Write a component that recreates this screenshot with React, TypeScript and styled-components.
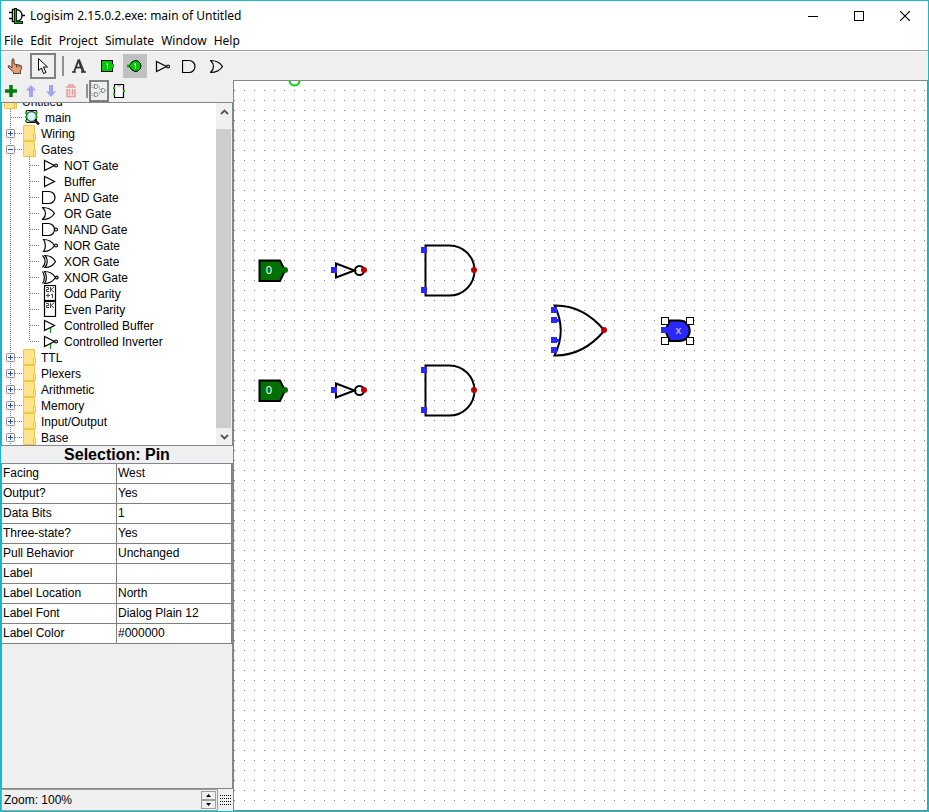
import React from "react";
import styled, { createGlobalStyle, css } from "styled-components";

const EDGE = "#828790";
const FACE = "#efefef";
const DOTS = "#808080";
const PORT = "#2828ff";
const ERROR = "#c00000";

const GlobalStyle = createGlobalStyle`
  *, *::before, *::after { box-sizing: border-box; }
  body { margin: 0; background: #fff; }
  button { margin: 0; padding: 0; border: 0; background: none; font: inherit; color: inherit; }
`;

const Window = styled.div`
  display: flex;
  flex-direction: column;
  height: 100vh;
  border: 1px solid #18b9c4;
  background: ${FACE};
  color: #000;
  font: 12px/16px "Liberation Sans", Arial, sans-serif;
`;

/* ---------- title and menus ---------- */

const TitleBar = styled.header`
  display: flex;
  align-items: center;
  gap: 5px;
  height: 30px;
  padding-left: 8px;
  background: #fff;
  font-family: "Noto Sans", sans-serif;
`;

const Title = styled.h1`
  flex: 1;
  margin: 0;
  font-size: 12px;
  font-weight: 400;
  white-space: nowrap;
`;

const CaptionGroup = styled.div`
  display: flex;
`;

const CaptionButton = styled.button`
  display: grid;
  place-items: center;
  width: 46px;
  height: 28px;
`;

const MenuBar = styled.nav`
  display: flex;
  align-items: center;
  gap: 7px;
  height: 20px;
  padding: 0 4px 0 3px;
  border-bottom: 1px solid #a0a0a0;
  background: #fff;
  font-family: "Noto Sans", sans-serif;

  button { line-height: 18px; }
`;

/* ---------- tool bars ---------- */

const ToolBar = styled.div`
  display: flex;
  align-items: center;
  gap: 4px;
  height: 29px;
  padding-left: 2px;
  border-top: 1px solid #fff;
`;

const ExplorerBar = styled(ToolBar)`
  gap: 2px;
  height: 22px;
  padding-left: 1px;
  border-top: 0;
`;

const ToolButton = styled.button<{ $state?: "selected" | "haloed"; $small?: boolean }>`
  display: grid;
  place-items: center;
  flex: none;
  width: ${(p) => (p.$small ? 18 : 24)}px;
  height: ${(p) => (p.$small ? 20 : 24)}px;
  ${(p) => p.$state === "haloed" && css`background: #c0c0c0;`}
  ${(p) => p.$state === "selected" && css`
    outline: 2px solid #808080;
    outline-offset: -1px;
  `}
`;

const Divider = styled.span<{ $small?: boolean }>`
  flex: none;
  width: 2px;
  height: ${(p) => (p.$small ? 14 : 20)}px;
  margin: ${(p) => (p.$small ? "0 0 0 4px" : "0 -1px 0 3px")};
  background: #909090;
`;

/* ---------- side panel ---------- */

const Workspace = styled.div`
  flex: 1;
  display: grid;
  grid-template-columns: 232px minmax(0, 1fr);
  min-height: 0;
`;

const Side = styled.aside`
  display: flex;
  flex-direction: column;
  min-height: 0;
`;

const TreePane = styled.div`
  display: flex;
  flex: 0 1 344px;
  min-height: 0;
  border: 1px solid ${EDGE};
  background: #fff;
`;

const TreeView = styled.div`
  flex: 1;
  display: flex;
  flex-direction: column;
  justify-content: flex-end;
  overflow: hidden;
`;

const TreeRow = styled.div`
  display: flex;
  flex: none;
  height: 16px;
  line-height: 18px;
  white-space: nowrap;
`;

const RowIcon = styled.span<{ $leaf?: boolean; $root?: boolean }>`
  flex: none;
  display: grid;
  place-items: center;
  width: ${(p) => (p.$leaf ? 20 : p.$root ? 18 : 16)}px;
  height: 16px;
  margin-right: ${(p) => (p.$root ? 2 : 3)}px;
`;

const ExpandButton = styled.button`
  flex: none;
  width: 20px;
  height: 16px;
  line-height: 0;
`;

const Guide = styled.svg`
  flex: none;
  display: block;
`;

const ScrollBar = styled.div`
  display: flex;
  flex-direction: column;
  width: 16px;
  background: #f0f0f0;
`;

const ScrollArrow = styled.button`
  display: grid;
  place-items: center;
  height: 17px;
`;

const ScrollThumb = styled.div`
  flex: 1;
  margin: 9px 1px 0 0;
  background: #cdcdcd;
`;

const PanelTitle = styled.h2`
  margin: 0;
  height: 17px;
  font-size: 16px;
  line-height: 17px;
  font-weight: 700;
  text-align: center;
`;

const AttributePane = styled.div`
  flex: 1;
  border: 1px solid ${EDGE};
  min-height: 0;
  overflow: hidden;
`;

const AttributeTable = styled.table`
  width: 100%;
  table-layout: fixed;
  border-collapse: separate;
  border-spacing: 0;
  background: #fff;

  th, td {
    height: 20px;
    padding: 0 1px 1px;
    border-right: 1px solid #808080;
    border-bottom: 1px solid #808080;
    font-weight: 400;
    text-align: left;
    white-space: nowrap;
  }
`;

const ZoomBar = styled.div`
  display: flex;
  align-items: center;
  height: 22px;
`;

const Spinner = styled.div`
  flex: 1;
  display: flex;
  height: 22px;
  padding: 1px;
  border: 1px solid #a0a0a0;
`;

const ZoomInput = styled.input`
  flex: 1;
  min-width: 0;
  padding: 0 1px;
  border: 0;
  background: ${FACE};
  font: inherit;
  color: inherit;
`;

const SpinnerKeys = styled.div`
  display: grid;
  grid-template-rows: 1fr 1fr;
  width: 15px;
`;

const SpinnerKey = styled.button`
  display: grid;
  place-items: center;
  border: 1px solid #a0a0a0;
`;

const GridToggle = styled.button`
  display: grid;
  place-items: center;
  width: 15px;
  height: 22px;
`;

/* ---------- canvas ---------- */

const Canvas = styled.main`
  min-width: 0;
  border: 1px solid ${EDGE};
  background: #fff;
  overflow: hidden;
`;

const Circuit = styled.svg`
  display: block;
  width: 100%;
  height: 100%;
  font-family: "Noto Sans", sans-serif;
`;

/* ---------- gate icons ---------- */

type GateKind =
  | "not" | "buffer" | "and" | "or" | "nand" | "nor" | "xor" | "xnor"
  | "odd" | "even" | "cbuffer" | "cinverter";

const orBody = "M3 2.5 C8 2.5 11 4 13.5 8.5 C11 13 8 14.5 3 14.5 C6 11 6 6 3 2.5 Z";
const norBody = "M1.5 2.5 C7 2.5 10 4.5 12.5 8.5 C10 12.5 7 14.5 1.5 14.5 C4 11 4 6 1.5 2.5 Z";
const twoK = "M4 2.5 H6.5 V4.5 H4.5 V6.5 H7 M8.5 2 V7 M12 2 L9 4.5 L12 7";

const gateShapes: Record<GateKind, React.ReactNode> = {
  not: <><path d="M2.5 3.5 V13.5 L12.5 8.5 Z" /><circle cx="14" cy="8.5" r="1.5" /></>,
  buffer: <path d="M2.5 3.5 V13.5 L12.5 8.5 Z" />,
  and: <path d="M7 2.5 H0.5 V14.5 H7 A6 6 0 0 0 7 2.5 Z" />,
  or: <path d="M0.5 2.5 C6 2.5 10 4.5 12.5 8.5 C10 12.5 6 14.5 0.5 14.5 C4.5 11 4.5 6 0.5 2.5 Z" />,
  nand: <><path d="M6.5 2.5 H0.5 V14.5 H6.5 A6 6 0 0 0 6.5 2.5 Z" /><circle cx="14" cy="8.5" r="1.5" /></>,
  nor: <><path d={norBody} /><circle cx="14" cy="8.5" r="1.5" /></>,
  xor: <><path d={orBody} /><path d="M0.5 2.5 C4 6 4 11 0.5 14.5" /></>,
  xnor: <><path d={norBody} transform="translate(1 0)" /><path d="M0.5 2.5 C3 6 3 11 0.5 14.5" /><circle cx="14.8" cy="8.5" r="1.3" /></>,
  odd: <><rect x="2.5" y="0.5" width="11" height="15" /><path stroke="#444" strokeWidth="1" d={`${twoK} M4 10.5 H8 M6 8.5 V12.5 M9 10 L10.5 9 V13`} /></>,
  even: <><rect x="2.5" y="0.5" width="11" height="15" /><path stroke="#444" strokeWidth="1" d={twoK} /></>,
  cbuffer: <><path stroke="#00a000" d="M8.5 10 V16" /><path d="M2.5 3.5 V13.5 L12.5 8.5 Z" /></>,
  cinverter: <><path stroke="#00a000" d="M8.5 10 V16" /><path d="M2.5 3.5 V13.5 L12.5 8.5 Z" /><circle cx="14" cy="8.5" r="1.5" /></>,
};

const GateIcon = ({ kind }: { kind: GateKind }) => (
  <svg width="18" height="16" viewBox="0 0 18 16" fill="none" stroke="#000" strokeWidth="1.2" aria-hidden="true">
    {gateShapes[kind]}
  </svg>
);

const FolderIcon = () => (
  <svg width="14" height="16" viewBox="0 0 14 16" aria-hidden="true">
    <path d="M0.5 0.5 H11.5 V9.5 H12.5 V15.5 H0.5 Z" fill="#ffe38d" stroke="#f0c649" />
    <path d="M10.5 15 V9.5 H12" stroke="#f0c649" fill="none" />
  </svg>
);

const CircuitIcon = () => (
  <svg width="16" height="16" viewBox="0 0 16 16" fill="none" aria-hidden="true">
    <path d="M2.5 1.5 H12.5 V13.5 H2.5 Z" stroke="#000" />
    <circle cx="7.5" cy="7.5" r="5" fill="#d4f6fa" stroke="#48575c" strokeWidth="1.3" />
    <path d="M10.5 11 L15 15.5" stroke="#222" strokeWidth="2.6" />
    <path d="M2 2.5 V5 M2 7 V9 M2 11 V13 M12.5 2.5 V5 M12.5 7 V9" stroke="#00c800" strokeWidth="2" />
  </svg>
);

/* ---------- tree ---------- */

const Expander = ({ open, name }: { open: boolean; name: string }) => (
  <ExpandButton aria-label={`${open ? "Collapse" : "Expand"} ${name}`} aria-expanded={open}>
    <svg width="20" height="16" viewBox="0 0 20 16">
      <path d="M8.5 0 V16 M9 8.5 H20" stroke={DOTS} strokeDasharray="1 1" />
      <rect x="4.5" y="4.5" width="8" height="8" rx="1" fill="#f4f4f4" stroke="#919191" />
      <path d={open ? "M6 8.5 H11" : "M6 8.5 H11 M8.5 6 V11"} stroke="#31539e" />
    </svg>
  </ExpandButton>
);

const LibraryRow = ({ name, open = false }: { name: string; open?: boolean }) => (
  <TreeRow role="treeitem" aria-expanded={open}>
    <Expander open={open} name={name} />
    <RowIcon><FolderIcon /></RowIcon>
    {name}
  </TreeRow>
);

const ToolRow = ({ kind, name, last }: { kind: GateKind; name: string; last: boolean }) => (
  <TreeRow role="treeitem">
    <Guide width="39" height="16" viewBox="0 0 39 16" aria-hidden="true">
      <path
        d={`M8.5 0 V16 M27.5 0 V${last ? 8 : 16} M28 8.5 H38`}
        stroke={DOTS}
        strokeDasharray="1 1"
      />
    </Guide>
    <RowIcon $leaf><GateIcon kind={kind} /></RowIcon>
    {name}
  </TreeRow>
);

const gates: [GateKind, string][] = [
  ["not", "NOT Gate"],
  ["buffer", "Buffer"],
  ["and", "AND Gate"],
  ["or", "OR Gate"],
  ["nand", "NAND Gate"],
  ["nor", "NOR Gate"],
  ["xor", "XOR Gate"],
  ["xnor", "XNOR Gate"],
  ["odd", "Odd Parity"],
  ["even", "Even Parity"],
  ["cbuffer", "Controlled Buffer"],
  ["cinverter", "Controlled Inverter"],
];

const libraries = ["TTL", "Plexers", "Arithmetic", "Memory", "Input/Output", "Base"];

const attributes = [
  ["Facing", "West"],
  ["Output?", "Yes"],
  ["Data Bits", "1"],
  ["Three-state?", "Yes"],
  ["Pull Behavior", "Unchanged"],
  ["Label", ""],
  ["Label Location", "North"],
  ["Label Font", "Dialog Plain 12"],
  ["Label Color", "#000000"],
];

/* ---------- circuit parts, placed by their connection point ---------- */

type Place = { x: number; y: number };

const Port = ({ x, y }: Place) => <rect x={x - 3} y={y - 3} width="6" height="6" fill={PORT} />;
const ErrorPort = ({ x, y }: Place) => <circle cx={x} cy={y} r="3" fill={ERROR} />;

const InputPin = ({ x, y }: Place) => (
  <g transform={`translate(${x} ${y})`}>
    <path d="M-25.5 -9.5 H-5 L0 0.5 L-5 11 H-25.5 Z" fill="#007000" stroke="#000" strokeWidth="2" />
    <circle cx="0" cy="0" r="3" fill="#007000" />
    <text x="-16" y="4" fontSize="11" fill="#fff" textAnchor="middle">0</text>
  </g>
);

const NotGate = ({ x, y }: Place) => (
  <g transform={`translate(${x} ${y})`}>
    <path d="M-28 -6.5 V7.5 L-9.5 0.5 Z" fill="none" stroke="#000" strokeWidth="2" />
    <circle cx="-4.5" cy="0.5" r="4.5" fill="none" stroke="#000" strokeWidth="2" />
    <Port x={-30} y={0} />
    <ErrorPort x={0} y={0} />
  </g>
);

const AndGate = ({ x, y }: Place) => (
  <g transform={`translate(${x} ${y})`}>
    <path d="M-24.5 -24.5 H-48.5 V25.5 H-24.5 A25 25 0 0 0 -24.5 -24.5 Z" fill="none" stroke="#000" strokeWidth="2" />
    <Port x={-50} y={-20} />
    <Port x={-50} y={20} />
    <ErrorPort x={0} y={0} />
  </g>
);

const OrGate = ({ x, y }: Place) => (
  <g transform={`translate(${x} ${y})`}>
    <path
      d="M0.5 0.5 Q-21 -25 -49.5 -24.5 Q-37 0.5 -49.5 25.5 Q-21 26 0.5 0.5 Z"
      fill="none"
      stroke="#000"
      strokeWidth="2"
    />
    <path d="M-50 -9.5 H-45 M-50 10.5 H-45" stroke={PORT} strokeWidth="3" />
    <Port x={-50} y={-20} />
    <Port x={-50} y={-10} />
    <Port x={-50} y={10} />
    <Port x={-50} y={20} />
    <ErrorPort x={0} y={0} />
  </g>
);

const handles = [[-3, -13], [22, -13], [-3, 7], [22, 7]];

const SelectedPin = ({ x, y }: Place) => (
  <g transform={`translate(${x} ${y})`}>
    <path d="M1 0.5 L6 -9.5 H15.5 A10.2 10.2 0 0 1 15.5 11 H6 Z" fill={PORT} stroke="#000" strokeWidth="2" />
    <rect x="-3" y="-3" width="9" height="6" fill={PORT} />
    <text x="14.5" y="4" fontSize="11" fill="#d8d8ff" textAnchor="middle">x</text>
    {handles.map(([hx, hy]) => (
      <rect key={`${hx},${hy}`} x={hx + 0.5} y={hy + 0.5} width="7" height="7" fill="#fff" stroke="#000" />
    ))}
  </g>
);

export default function App() {
  return (
    <>
      <GlobalStyle />
      <Window>
        <TitleBar>
          <svg width="16" height="16" viewBox="0 0 16 16" fill="none" aria-hidden="true">
            <path d="M3.5 1.5 H7 C15 2 15 13 7 13.5 H3.5 Z M0 4.5 H3 M0 10.5 H3 M13 7.5 H16" stroke="#000" strokeWidth="1.4" />
            <path d="M6.5 0 V14.5 H14" stroke="#000" strokeWidth="3" />
            <path d="M6.5 1 V14.5 H13" stroke="#10b010" strokeWidth="1.4" />
          </svg>
          <Title>Logisim 2.15.0.2.exe: main of Untitled</Title>
          <CaptionGroup>
            <CaptionButton aria-label="Minimize">
              <svg width="10" height="10" viewBox="0 0 10 10"><path d="M0 5.5 H10" stroke="#000" /></svg>
            </CaptionButton>
            <CaptionButton aria-label="Maximize">
              <svg width="10" height="10" viewBox="0 0 10 10"><rect x="0.5" y="0.5" width="9" height="9" fill="none" stroke="#000" /></svg>
            </CaptionButton>
            <CaptionButton aria-label="Close">
              <svg width="10" height="10" viewBox="0 0 10 10"><path d="M0 0 L10 10 M10 0 L0 10" stroke="#000" strokeWidth="1.2" /></svg>
            </CaptionButton>
          </CaptionGroup>
        </TitleBar>
        <MenuBar aria-label="Main menu">
          {["File", "Edit", "Project", "Simulate", "Window", "Help"].map((m) => (
            <button key={m}>{m}</button>
          ))}
        </MenuBar>
        <ToolBar role="toolbar" aria-label="Tools">
          <ToolButton aria-label="Poke Tool">
            <svg width="16" height="16" viewBox="0 0 16 16">
              <path d="M5 8 V1.5 Q6 0 7 1.5 V6 L14 7.5 Q15 8 14.5 10 L13.5 13 V15.5 H6.5 V14 L1 9 Q1 7 3 8 L5 10 Z" fill="#dba07c" stroke="#6b3a22" />
              <path d="M9.5 7 V9.5 M12 7.5 V9.5" stroke="#6b3a22" />
            </svg>
          </ToolButton>
          <ToolButton aria-label="Edit Tool" $state="selected">
            <svg width="16" height="16" viewBox="0 0 16 16">
              <path d="M3.5 0.5 V12.5 L6.5 10 L8.5 15.5 L11 14.5 L8.5 9 H12.5 Z" fill="#fff" stroke="#000" />
            </svg>
          </ToolButton>
          <Divider />
          <ToolButton aria-label="Text Tool">
            <svg width="16" height="16" viewBox="0 0 16 16" fill="none" stroke="#333">
              <path d="M3 14 L7.5 2" strokeWidth="1.8" />
              <path d="M7.5 1.5 L12.5 14" strokeWidth="2.6" />
              <path d="M4.5 9.5 H11" strokeWidth="1.8" />
              <path d="M1 14 H5 M10 14 H15" strokeWidth="1.4" />
            </svg>
          </ToolButton>
          <ToolButton aria-label="Input Pin">
            <svg width="16" height="16" viewBox="0 0 16 16">
              <rect x="2.5" y="2.5" width="11" height="11" fill="#00c800" stroke="#000" />
              <path d="M14 6 V10" stroke="#00c800" strokeWidth="2" />
              <path d="M7 6.5 L8.5 5.5 V11" stroke="#fff" fill="none" />
            </svg>
          </ToolButton>
          <ToolButton aria-label="Output Pin" $state="haloed">
            <svg width="16" height="16" viewBox="0 0 16 16">
              <path d="M2 8 L5 4 Q8 1.5 11 3 Q14 5 14 8 Q14 11 11 13 Q8 14.5 5 12 Z" fill="#00c800" stroke="#000" />
              <path d="M1 6.5 V9.5" stroke="#00c800" strokeWidth="2" />
              <path d="M7 6.5 L8.5 5.5 V11" stroke="#fff" fill="none" />
            </svg>
          </ToolButton>
          <ToolButton aria-label="NOT Gate"><GateIcon kind="not" /></ToolButton>
          <ToolButton aria-label="AND Gate"><GateIcon kind="and" /></ToolButton>
          <ToolButton aria-label="OR Gate"><GateIcon kind="or" /></ToolButton>
        </ToolBar>
        <Workspace>
          <Side>
            <ExplorerBar role="toolbar" aria-label="Explorer">
              <ToolButton $small aria-label="Add Circuit">
                <svg width="14" height="14" viewBox="0 0 14 14"><path d="M7 1 V13 M1 7 H13" stroke="#087a08" strokeWidth="3.5" /></svg>
              </ToolButton>
              <ToolButton $small aria-label="Move Circuit Up">
                <svg width="12" height="12" viewBox="0 0 12 12"><path d="M6 0 L11 5.5 H8 V12 H4 V5.5 H1 Z" fill="#a5a5ec" /></svg>
              </ToolButton>
              <ToolButton $small aria-label="Move Circuit Down">
                <svg width="12" height="12" viewBox="0 0 12 12"><path d="M6 12 L11 6.5 H8 V0 H4 V6.5 H1 Z" fill="#a5a5ec" /></svg>
              </ToolButton>
              <ToolButton $small aria-label="Remove Circuit">
                <svg width="12" height="14" viewBox="0 0 12 14" fill="none" stroke="#e59a9a" strokeWidth="1.5">
                  <path d="M1 3 H11 M4 2.5 V1 H8 V2.5" />
                  <path d="M2 5 V12.5 H10 V5 M4.5 5 V11 M7.5 5 V11" />
                </svg>
              </ToolButton>
              <Divider $small />
              <ToolButton $small $state="selected" aria-label="Edit Circuit Layout">
                <svg width="16" height="16" viewBox="0 0 16 16" fill="none" stroke="#8c8c8c">
                  <path d="M3.5 1.5 H5 A2 2 0 0 1 5 5.5 H3.5 Z M3.5 9.5 H5 A2 2 0 0 1 5 13.5 H3.5 Z M10.5 5.5 H12 A2 2 0 0 1 12 9.5 H10.5 Z" />
                  <path d="M0 2.5 H3 M0 4.5 H3 M0 10.5 H3 M0 12.5 H3 M7 3.5 H8.5 V6.5 H10 M7 11.5 H8.5 V8.5 H10 M14 7.5 H16" stroke="#9fd09f" />
                </svg>
              </ToolButton>
              <ToolButton $small aria-label="Edit Circuit Appearance">
                <svg width="14" height="16" viewBox="0 0 14 16" fill="none">
                  <path d="M2.5 1.5 H11.5 V14.5 H2.5 Z" fill="#fff" stroke="#000" strokeWidth="1.2" />
                  <path d="M5 2 Q7 5 9 2" stroke="#909090" />
                  <path d="M1 5 H3 M1 11 H3 M11 8 H13" stroke="#00c800" strokeWidth="2" />
                </svg>
              </ToolButton>
            </ExplorerBar>

            <TreePane>
              <TreeView role="tree" aria-label="Circuits and libraries">
                <TreeRow role="treeitem">
                  <RowIcon $root><FolderIcon /></RowIcon>
                  Untitled*
                </TreeRow>
                <TreeRow role="treeitem">
                  <Guide width="20" height="16" viewBox="0 0 20 16" aria-hidden="true">
                    <path d="M8.5 0 V16 M9 8.5 H20" stroke={DOTS} strokeDasharray="1 1" />
                  </Guide>
                  <RowIcon $leaf><CircuitIcon /></RowIcon>
                  main
                </TreeRow>
                <LibraryRow name="Wiring" />
                <LibraryRow name="Gates" open />
                {gates.map(([kind, name], i) => (
                  <ToolRow key={kind} kind={kind} name={name} last={i === gates.length - 1} />
                ))}
                {libraries.map((name) => <LibraryRow key={name} name={name} />)}
              </TreeView>
              <ScrollBar>
                <ScrollArrow aria-label="Scroll up">
                  <svg width="9" height="6" viewBox="0 0 9 6"><path d="M1 5 L4.5 1.5 L8 5" fill="none" stroke="#555" strokeWidth="1.8" /></svg>
                </ScrollArrow>
                <ScrollThumb />
                <ScrollArrow aria-label="Scroll down">
                  <svg width="9" height="6" viewBox="0 0 9 6"><path d="M1 1 L4.5 4.5 L8 1" fill="none" stroke="#555" strokeWidth="1.8" /></svg>
                </ScrollArrow>
              </ScrollBar>
            </TreePane>

            <PanelTitle>Selection: Pin</PanelTitle>

            <AttributePane>
              <AttributeTable aria-label="Attributes">
                <tbody>
                  {attributes.map(([name, value]) => (
                    <tr key={name}>
                      <th scope="row">{name}</th>
                      <td>{value}</td>
                    </tr>
                  ))}
                </tbody>
              </AttributeTable>
            </AttributePane>

            <ZoomBar>
              <Spinner>
                <ZoomInput aria-label="Zoom" defaultValue="Zoom: 100%" />
                <SpinnerKeys>
                  <SpinnerKey aria-label="Zoom in">
                    <svg width="5" height="3" viewBox="0 0 5 3"><path d="M0 3 L2.5 0 L5 3 Z" /></svg>
                  </SpinnerKey>
                  <SpinnerKey aria-label="Zoom out">
                    <svg width="5" height="3" viewBox="0 0 5 3"><path d="M0 0 L2.5 3 L5 0 Z" /></svg>
                  </SpinnerKey>
                </SpinnerKeys>
              </Spinner>
              <GridToggle aria-label="Show grid">
                <svg width="11" height="11" viewBox="0 0 11 11" stroke="#000" strokeDasharray="1 1">
                  <path d="M0 0.5 H11 M0 3.5 H11 M0 6.5 H11 M0 9.5 H11" />
                </svg>
              </GridToggle>
            </ZoomBar>
          </Side>

          <Canvas>
            <Circuit role="img" aria-label="Circuit main">
              <defs>
                <pattern id="grid" y="-1" width="10" height="10" patternUnits="userSpaceOnUse">
                  <rect width="1" height="1" fill={DOTS} />
                </pattern>
              </defs>
              <rect width="100%" height="100%" fill="url(#grid)" />
              <g transform="translate(0 -1)">
                <circle cx="60.5" cy="0.5" r="5" fill="none" stroke="#00d200" strokeWidth="2" />
                <InputPin x={51} y={190} />
                <InputPin x={51} y={310} />
                <NotGate x={130} y={190} />
                <NotGate x={130} y={310} />
                <AndGate x={240} y={190} />
                <AndGate x={240} y={310} />
                <OrGate x={370} y={250} />
                <SelectedPin x={430} y={250} />
              </g>
            </Circuit>
          </Canvas>
        </Workspace>
      </Window>
    </>
  );
}
